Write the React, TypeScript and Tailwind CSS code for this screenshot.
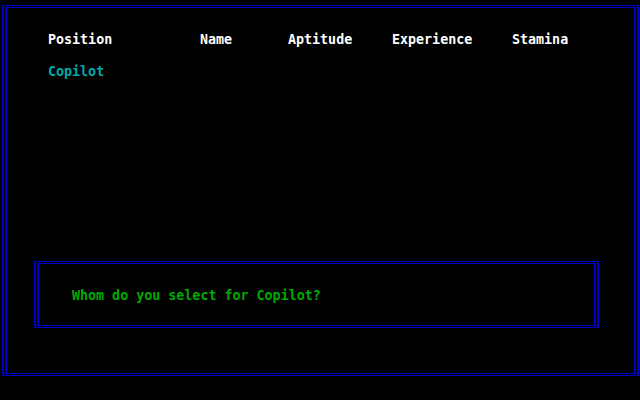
export default function App() {
  const font = { fontFamily: '"DejaVu Sans Mono", "Liberation Mono", monospace' };
  return (
    <div className="w-[640px] h-[400px] bg-black pt-[5px] pl-[2px] overflow-hidden" style={font}>
      <div className="w-[637px] h-[371px] border-[#0000c8] border-x-2 border-y p-[1px] box-border">
        <div className="w-full h-full border-[#0000c8] border-x-2 border-y box-border pt-[24px] pl-[41px] flex flex-col">
          <div className="grid grid-cols-[152px_88px_104px_120px_1fr] text-[13.33px] leading-[16px] font-bold text-white">
            <div>Position</div>
            <div>Name</div>
            <div>Aptitude</div>
            <div>Experience</div>
            <div>Stamina</div>
          </div>
          <div className="mt-[16px] text-[13.33px] leading-[16px] font-bold text-[#00aaaa]">Copilot</div>
          <div className="mt-[181px] -ml-[14px] w-[565px] h-[67px] border-[#0000c8] border-x-2 border-y p-[1px] box-border">
            <div className="w-full h-full border-[#0000c8] border-x-2 border-y box-border pt-[24px] pl-[33px]">
              <div className="text-[13.33px] leading-[16px] font-bold text-[#00aa00] whitespace-pre">Whom do you select for Copilot?</div>
            </div>
          </div>
        </div>
      </div>
    </div>
  );
}
